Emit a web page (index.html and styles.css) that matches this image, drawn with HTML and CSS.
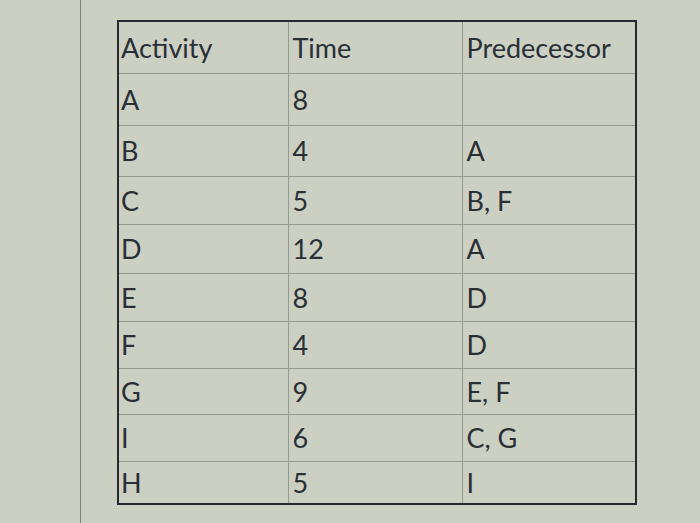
FILE: index.html
```html
<!DOCTYPE html>
<html>
<head>
<meta charset="utf-8">
<link rel="stylesheet" href="styles.css">
</head>
<body>
<div class="screen">
  <div class="sheet">
    <table class="grid">
      <colgroup><col class="c1"><col class="c2"><col class="c3"></colgroup>
      <tr class="r1"><td>Activity</td><td>Time</td><td>Predecessor</td></tr>
      <tr class="r2"><td>A</td><td>8</td><td></td></tr>
      <tr class="r3"><td>B</td><td>4</td><td>A</td></tr>
      <tr class="r4"><td>C</td><td>5</td><td>B, F</td></tr>
      <tr class="r5"><td>D</td><td>12</td><td>A</td></tr>
      <tr class="r6"><td>E</td><td>8</td><td>D</td></tr>
      <tr class="r7"><td>F</td><td>4</td><td>D</td></tr>
      <tr class="r8"><td>G</td><td>9</td><td>E, F</td></tr>
      <tr class="r9"><td>I</td><td>6</td><td>C, G</td></tr>
      <tr class="r10"><td>H</td><td>5</td><td>I</td></tr>
    </table>
  </div>
</div>
</body>
</html>
```
FILE: styles.css
```css
html, body { margin: 0; padding: 0; }
body {
  width: 700px;
  height: 523px;
  overflow: hidden;
  background: #cbd0c3;
  font-family: Lato, "Open Sans", sans-serif;
}
.screen {
  margin-left: 80px;
  height: 523px;
  border-left: 1px solid #7d8279;
  padding-left: 36px;
  padding-top: 20px;
  box-sizing: border-box;
}
.grid {
  border-collapse: collapse;
  table-layout: fixed;
  width: 518px;
  border: 2px solid #262a2c;
  color: #2a2f36;
  font-size: 27px;
}
.c1 { width: 170px; }
.c2 { width: 174px; }
.c3 { width: 174px; }
.grid td {
  border: 1px solid #959a90;
  padding: 0 0 0 4px;
  vertical-align: middle;
  line-height: 1;
  white-space: nowrap;
}
.grid td:first-child { border-left: 2px solid #262a2c; padding-left: 2px; }
.grid td:last-child { border-right: 2px solid #262a2c; }
.r1 td { border-top: 2px solid #262a2c; }
.r10 td { border-bottom: 2px solid #262a2c; }
.r1 { height: 52px; }
.r2 { height: 52px; }
.r3 { height: 51px; }
.r4 { height: 48px; }
.r5 { height: 49px; }
.r6 { height: 48px; }
.r7 { height: 47px; }
.r8 { height: 46px; }
.r9 { height: 47px; }
.r10 { height: 43px; }
```
